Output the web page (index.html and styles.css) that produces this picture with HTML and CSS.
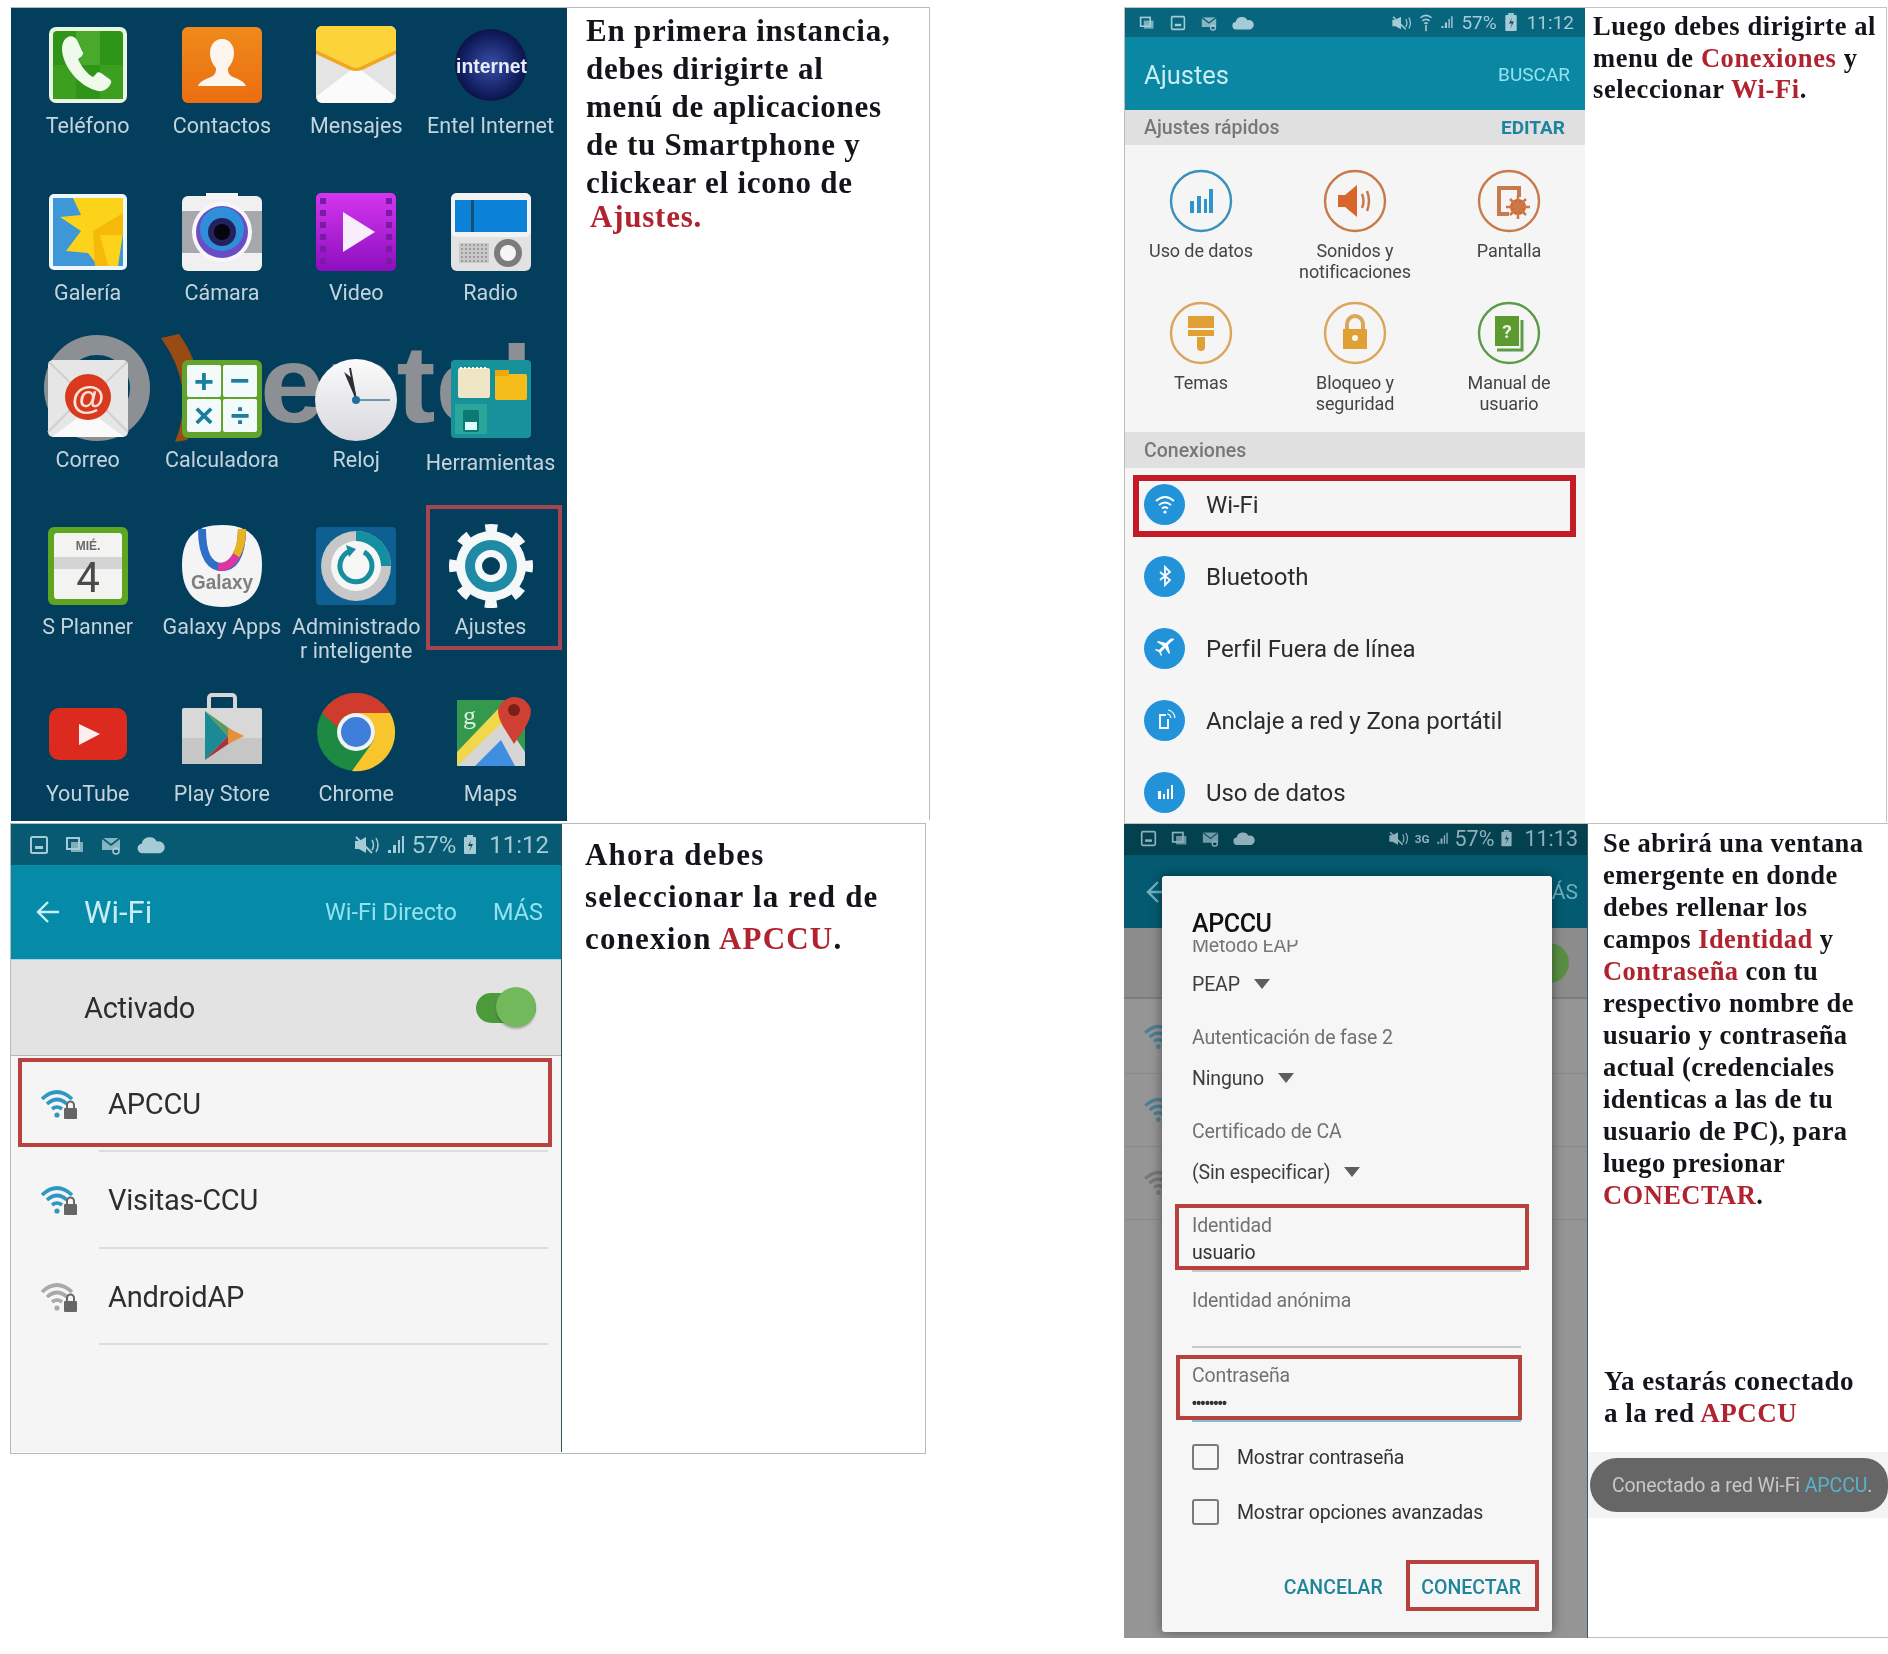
FILE: index.html
```html
<!DOCTYPE html>
<html lang="es">
<head>
<meta charset="utf-8">
<title>Conexión a la red APCCU</title>
<link rel="stylesheet" href="styles.css">
</head>
<body>
<svg class="sprite" aria-hidden="true">
  <symbol id="st-pic" viewBox="0 0 20 20"><rect x="2" y="2" width="16" height="16" rx="1.5" fill="none" stroke="currentColor" stroke-width="2"/><rect x="6" y="11" width="8" height="3" fill="currentColor"/></symbol>
  <symbol id="st-msg" viewBox="0 0 20 20"><rect x="2" y="3" width="12" height="11" fill="none" stroke="currentColor" stroke-width="2"/><path d="M6 7h12v10H6z" fill="currentColor" opacity=".75"/></symbol>
  <symbol id="st-mail" viewBox="0 0 20 20"><rect x="1" y="3" width="18" height="12" fill="currentColor" opacity=".8"/><path d="M1 3l9 7 9-7" fill="none" stroke="#0a5a70" stroke-width="1.6"/><circle cx="15" cy="16" r="3" fill="none" stroke="currentColor" stroke-width="1.5"/></symbol>
  <symbol id="st-cloud" viewBox="0 0 24 16"><path d="M5 15a4 4 0 0 1-1-8 7 7 0 0 1 13-2 5 5 0 0 1 3 10z" fill="currentColor"/></symbol>
  <symbol id="st-mute" viewBox="0 0 28 20"><path d="M7 6l7-4v16l-7-4H3V6z" fill="currentColor"/><path d="M4 2l16 16" stroke="currentColor" stroke-width="2"/><path d="M20 5q3 5 0 10M24 3q4 7 0 14" fill="none" stroke="currentColor" stroke-width="1.5"/></symbol>
  <symbol id="st-sig" viewBox="0 0 20 20"><path d="M2 18h3v-3H2zM7 18h3V10H7zM12 18h2V5h-2zM16 18h2V1h-2z" fill="currentColor"/></symbol>
  <symbol id="st-wifi" viewBox="0 0 16 24"><path d="M1 6q7-6 14 0M3.500 10q4.500-4 9 0M6 13.500q2-2 4 0" fill="none" stroke="currentColor" stroke-width="2"/><path d="M7 15h2v8H7z" fill="currentColor"/></symbol>
  <symbol id="st-bat" viewBox="0 0 14 20"><rect x="1" y="2" width="12" height="17" rx="1" fill="currentColor"/><rect x="4" y="0" width="6" height="2" fill="currentColor"/><path d="M8 5l-3 6h3l-2 6 4-8H7z" fill="#0a4a5c"/></symbol>
  <symbol id="wifi-lock" viewBox="0 0 38 32"><path d="M1 11Q16 -3 31 11M6 16q10-9 20 0M11 21q5-4 10 0" fill="none" stroke="currentColor" stroke-width="3.600"/><circle cx="16" cy="27" r="2.600" fill="currentColor"/><rect x="23" y="20" width="13" height="11" rx="1" fill="#666"/><path d="M26 20v-3a3.500 3.500 0 0 1 7 0v3" fill="none" stroke="#666" stroke-width="2"/></symbol>
</svg>

<main class="sheet">

  <section class="panel panel-apps">
    <div class="phone apps">
      <svg class="watermark" viewBox="0 0 556 813" aria-hidden="true">
        <circle cx="86" cy="380" r="43" fill="none" stroke="#8c9094" stroke-width="20"/>
        <path d="M150 330Q186 380 164 434L176 432Q204 376 168 326z" fill="#9a4b14"/>
        <text x="249" y="414" font-family="Liberation Sans" font-weight="700" font-size="110" textLength="273" lengthAdjust="spacingAndGlyphs" fill="#8c9094">entel</text>
      </svg>
      <div class="app-grid">
        <div class="app">
          <svg class="ico" viewBox="0 0 80 78"><rect x="1" y="1" width="78" height="76" rx="7" fill="#eaf5e2"/><rect x="5" y="5" width="70" height="68" rx="4" fill="#2f9518"/><path d="M28 5h24v34H28z" fill="#49a92a"/><path d="M5 39h23v34H5z" fill="#3c9f20"/><path d="M52 39h23v34H52z" fill="#3c9f20"/><path d="M20 11C14 14 13 22 15 30 19 45 33 61 50 65 56 66 61 62 63 57 64 55 62 53 60 52L53 47C51 46 49 46 48 48L45 51C39 48 33 40 30 33L34 30C35 28 36 27 34 25L29 14C27 11 23 9 20 11Z" fill="#f0faec"/></svg>
          <span class="app-name">Teléfono</span>
        </div>
        <div class="app">
          <svg class="ico" viewBox="0 0 80 78"><defs><linearGradient id="g-o" x1="0" y1="0" x2="0" y2="1"><stop offset="0" stop-color="#f08a1c"/><stop offset="1" stop-color="#ea6e10"/></linearGradient></defs><rect x="0" y="1" width="80" height="76" rx="6" fill="url(#g-o)"/><path d="M40 13c-8 0-12 7-12 14 0 6 3 12 6 15 0 5-1 7-5 9-5 2-11 4-13 9h48c-2-5-8-7-13-9-4-2-5-4-5-9 3-3 6-9 6-15 0-7-4-14-12-14z" fill="#fdf6ef"/></svg>
          <span class="app-name">Contactos</span>
        </div>
        <div class="app">
          <svg class="ico" viewBox="0 0 80 78"><rect x="0" y="0" width="80" height="77" rx="6" fill="#e4e4e4"/><path d="M1 70L40 40 79 70v1a6 6 0 0 1-6 6H7a6 6 0 0 1-6-6z" fill="#fbfbfb"/><path d="M0 6a6 6 0 0 1 6-6h68a6 6 0 0 1 6 6v18L46 40q-6 3-12 0L0 24z" fill="#fcd338"/><path d="M0 24L34 40q6 3 12 0L80 24v4L46 44q-6 2-12 0L0 28z" fill="#f1a81e"/></svg>
          <span class="app-name">Mensajes</span>
        </div>
        <div class="app">
          <svg class="ico" viewBox="0 0 80 78"><defs><radialGradient id="g-net" cx=".5" cy=".5" r=".6"><stop offset="0" stop-color="#3b4fa8"/><stop offset=".7" stop-color="#101c5c"/><stop offset="1" stop-color="#060c30"/></radialGradient></defs><circle cx="40" cy="39" r="36" fill="url(#g-net)"/><text x="5" y="47" class="ico-net" textLength="71" lengthAdjust="spacingAndGlyphs">internet</text></svg>
          <span class="app-name">Entel Internet</span>
        </div>

        <div class="app">
          <svg class="ico" viewBox="0 0 80 78"><rect x="1" y="1" width="78" height="76" rx="5" fill="#eef8fb"/><rect x="5" y="5" width="70" height="68" rx="3" fill="#2a78c4"/><path d="M5 5h70v68H5z" fill="#3e97d6"/><path d="M25 5H75V40L70 73H50L40 60 18 58 33 38 12 24 33 22z" fill="#fdd21a"/><path d="M45 38L75 20v22L52 42 60 73H47z" fill="#f6b809"/></svg>
          <span class="app-name">Galería</span>
        </div>
        <div class="app">
          <svg class="ico" viewBox="0 0 80 78"><rect x="0" y="3" width="80" height="75" rx="6" fill="#f0f0f0"/><rect x="24" y="0" width="32" height="6" fill="#f5f5f5"/><rect x="0" y="18" width="80" height="42" fill="#a7a8ad"/><circle cx="40" cy="39" r="30" fill="#f6f6fb"/><circle cx="40" cy="39" r="26" fill="#6a4cc4"/><circle cx="40" cy="36" r="22" fill="#2f8fd8"/><circle cx="40" cy="39" r="14" fill="#24225c"/><circle cx="40" cy="39" r="8" fill="#050510"/></svg>
          <span class="app-name">Cámara</span>
        </div>
        <div class="app">
          <svg class="ico" viewBox="0 0 80 78"><defs><linearGradient id="g-v" x1="0" y1="0" x2="0" y2="1"><stop offset="0" stop-color="#d436ee"/><stop offset="1" stop-color="#8c0fc0"/></linearGradient></defs><rect x="0" y="0" width="80" height="78" rx="5" fill="url(#g-v)"/><path d="M4 5h6v6H4zM4 17h6v6H4zM4 29h6v6H4zM4 41h6v6H4zM4 53h6v6H4zM4 65h6v6H4zM70 5h6v6h-6zM70 17h6v6h-6zM70 29h6v6h-6zM70 41h6v6h-6zM70 53h6v6h-6zM70 65h6v6h-6z" fill="#7a1aa5"/><path d="M27 19L59 39 27 59z" fill="#f8eefb"/></svg>
          <span class="app-name">Video</span>
        </div>
        <div class="app">
          <svg class="ico" viewBox="0 0 80 78"><rect x="0" y="0" width="80" height="78" rx="6" fill="#e2e2e2"/><rect x="0" y="0" width="80" height="44" rx="6" fill="#f3f3f3"/><rect x="4" y="7" width="72" height="32" fill="#0b82d8"/><rect x="20" y="7" width="3" height="32" fill="#14506f"/><path d="M8 50h30v20H8z" fill="#c8c8c8"/><path d="M10 52h26M10 56h26M10 60h26M10 64h26M10 68h26" stroke="#8e8e8e" stroke-width="1.600" stroke-dasharray="2 2"/><circle cx="57" cy="60" r="14" fill="#7b7b7b"/><circle cx="57" cy="60" r="8" fill="#f5f5f5"/></svg>
          <span class="app-name">Radio</span>
        </div>

        <div class="app">
          <svg class="ico" viewBox="0 0 80 78"><rect x="0" y="0" width="80" height="77" rx="5" fill="#e6e6e6"/><path d="M1 2L34 34q6 4 12 0L79 2" fill="none" stroke="#cfcfcf" stroke-width="2"/><path d="M0 72L22 50M80 72L58 50" stroke="#cfcfcf" stroke-width="2"/><path d="M4 77L40 50 76 77z" fill="#fafafa"/><circle cx="40" cy="37" r="23" fill="#d8391f"/><text x="40" y="49" text-anchor="middle" class="ico-at">@</text></svg>
          <span class="app-name">Correo</span>
        </div>
        <div class="app">
          <svg class="ico" viewBox="0 0 80 78"><rect x="0" y="0" width="80" height="78" rx="6" fill="#61a32c"/><rect x="5" y="5" width="34" height="32" rx="2" fill="#f2fafa"/><rect x="41" y="5" width="34" height="32" rx="2" fill="#f2fafa"/><rect x="5" y="39" width="34" height="33" rx="2" fill="#f2fafa"/><rect x="41" y="39" width="34" height="33" rx="2" fill="#f2fafa"/><text x="22" y="33" class="ico-op">+</text><text x="58" y="32" class="ico-op">−</text><text x="22" y="67" class="ico-op">×</text><text x="58" y="67" class="ico-op">÷</text></svg>
          <span class="app-name">Calculadora</span>
        </div>
        <div class="app">
          <svg class="ico" viewBox="0 0 80 78"><defs><linearGradient id="g-c" x1="0" y1="0" x2="0" y2="1"><stop offset="0" stop-color="#fbfbfb"/><stop offset="1" stop-color="#d8d8de"/></linearGradient></defs><circle cx="40" cy="40" r="41" fill="url(#g-c)"/><path d="M40 40L28 12 36 18 41 40z" fill="#2b2f33"/><path d="M40 40L34 8" stroke="#2b2f33" stroke-width="2"/><path d="M40 40H74" stroke="#3a7d9b" stroke-width="1.500"/><circle cx="40" cy="40" r="4" fill="#1d6e9a"/></svg>
          <span class="app-name">Reloj</span>
        </div>
        <div class="app app-low">
          <svg class="ico" viewBox="0 0 80 78"><rect x="0" y="0" width="80" height="78" rx="4" fill="#17929a"/><rect x="7" y="8" width="32" height="30" rx="2" fill="#efe6c6"/><path d="M9 8h28" stroke="#fff" stroke-width="2" stroke-dasharray="2 2"/><rect x="44" y="14" width="32" height="26" rx="2" fill="#f5bd1c"/><rect x="44" y="10" width="14" height="6" fill="#eea80e"/><rect x="4" y="44" width="32" height="30" fill="#2aa79a"/><rect x="12" y="50" width="16" height="22" rx="2" fill="#0c7a73"/><rect x="14" y="62" width="12" height="8" fill="#dff"/></svg>
          <span class="app-name">Herramientas</span>
        </div>

        <div class="app">
          <svg class="ico" viewBox="0 0 80 78"><rect x="0" y="0" width="80" height="78" rx="6" fill="#5ea521"/><rect x="6" y="6" width="68" height="66" rx="3" fill="#f3f3f1"/><rect x="6" y="30" width="68" height="12" fill="#d4d4d4"/><text x="40" y="23" text-anchor="middle" class="ico-cal-d">MIÉ.</text><text x="40" y="65" text-anchor="middle" class="ico-cal-n">4</text></svg>
          <span class="app-name">S Planner</span>
        </div>
        <div class="app">
          <svg class="ico" viewBox="0 0 80 78"><path d="M40-2C66-2 80 10 80 38S66 80 40 80 0 66 0 38 14-2 40-2z" fill="#f4f4f4"/><path d="M20 2c0 30 10 38 20 38S60 32 60 2" fill="none" stroke="#2f6fc8" stroke-width="8"/><path d="M36 40c10 1 24-8 24-38" fill="none" stroke="#d9369f" stroke-width="8"/><path d="M54 28c4-6 6-14 6-26" fill="none" stroke="#e5b420" stroke-width="8"/><text x="40" y="62" text-anchor="middle" class="ico-gal" textLength="62" lengthAdjust="spacingAndGlyphs">Galaxy</text></svg>
          <span class="app-name">Galaxy Apps</span>
        </div>
        <div class="app">
          <svg class="ico" viewBox="0 0 80 78"><rect x="0" y="0" width="80" height="78" rx="4" fill="#0e5f92"/><circle cx="40" cy="39" r="35" fill="#c7c7c7"/><path d="M40 4A35 35 0 0 1 75 39L60 39A20 20 0 0 0 40 19z" fill="#12909e"/><circle cx="40" cy="39" r="25" fill="#f6f6f6"/><path d="M34 24a16 16 0 1 0 14 1" fill="none" stroke="#168ea0" stroke-width="5"/><path d="M30 18l10 4-7 8z" fill="#168ea0"/></svg>
          <span class="app-name">Administrado<br>r inteligente</span>
        </div>
        <div class="app app-marked">
          <svg class="ico" viewBox="0 0 80 78"><circle cx="40" cy="39" r="38" fill="none" stroke="#f4f8f9" stroke-width="8" stroke-dasharray="12 17.850" stroke-dashoffset="6"/><circle cx="40" cy="39" r="35" fill="#f4f8f9"/><circle cx="40" cy="39" r="26" fill="#1e8aa5"/><circle cx="40" cy="39" r="16" fill="#f4f8f9"/><circle cx="40" cy="39" r="9" fill="#033e5c"/></svg>
          <span class="app-name">Ajustes</span>
          <span class="mark mark-app"></span>
        </div>

        <div class="app">
          <svg class="ico" viewBox="0 0 80 78"><rect x="1" y="14" width="78" height="52" rx="10" fill="#dc2a1e"/><path d="M31 30L52 40 31 51z" fill="#fbeeee"/></svg>
          <span class="app-name">YouTube</span>
        </div>
        <div class="app">
          <svg class="ico" viewBox="0 0 80 78"><path d="M27 16V4a3 3 0 0 1 3-3h20a3 3 0 0 1 3 3v12" fill="none" stroke="#d6d6d6" stroke-width="4"/><rect x="0" y="14" width="80" height="56" rx="2" fill="#d8d8d8"/><rect x="0" y="44" width="80" height="26" fill="#c6c6c6"/><path d="M23 17L46 42 23 66z" fill="#1b8a95"/><path d="M23 17L58 42 46 42z" fill="#5e9a5d"/><path d="M23 66L46 42 58 42z" fill="#a8343f"/><path d="M46 34L62 42 46 50z" fill="#e88f39"/></svg>
          <span class="app-name">Play Store</span>
        </div>
        <div class="app">
          <svg class="ico" viewBox="0 0 80 78"><circle cx="40" cy="38" r="39" fill="#1d8a44"/><path d="M6 19A39 39 0 0 1 74 19H40A20 20 0 0 0 21 33z" fill="#cf3b2c"/><path d="M74 19A39 39 0 0 1 36 77L54 52A20 20 0 0 0 40 19z" fill="#f8c52c"/><circle cx="40" cy="38" r="19" fill="#f2f2f2"/><circle cx="40" cy="38" r="15" fill="#3f7fd9"/></svg>
          <span class="app-name">Chrome</span>
        </div>
        <div class="app">
          <svg class="ico" viewBox="0 0 80 78"><rect x="6" y="6" width="68" height="66" fill="#35994d"/><path d="M6 72L50 22 74 58V72z" fill="#d6d6d6"/><path d="M6 72V58L48 14 56 24z" fill="#f0d84a"/><path d="M24 72L50 46 64 72z" fill="#3f8ee0"/><text x="12" y="30" class="ico-g">g</text><path d="M63 50C55 36 47 28 47 16a17 17 0 0 1 33 0C80 28 71 38 63 50z" fill="#cf3f33"/><circle cx="63" cy="16" r="6" fill="#7a2018"/></svg>
          <span class="app-name">Maps</span>
        </div>
      </div>
    </div>
    <p class="note note-apps">En primera instancia,<br>debes dirigirte al<br>menú de aplicaciones<br>de tu Smartphone y<br>clickear el icono de<br><span class="accent accent-tail">Ajustes.</span></p>
  </section>

  <section class="panel panel-settings">
    <div class="phone settings">
      <div class="status status-settings">
        <div class="st-left"><svg class="si"><use href="#st-msg"/></svg><svg class="si"><use href="#st-pic"/></svg><svg class="si"><use href="#st-mail"/></svg><svg class="si si-w"><use href="#st-cloud"/></svg></div>
        <div class="st-right"><svg class="si si-w"><use href="#st-mute"/></svg><svg class="si si-n"><use href="#st-wifi"/></svg><svg class="si si-n"><use href="#st-sig"/></svg><span>57%</span><svg class="si si-n"><use href="#st-bat"/></svg><span class="st-time">11:12</span></div>
      </div>
      <header class="appbar appbar-settings"><span class="ab-title">Ajustes</span><span class="ab-act">BUSCAR</span></header>
      <div class="band band-quick"><span>Ajustes rápidos</span><span class="band-act">EDITAR</span></div>
      <div class="quick">
        <div class="qk">
          <svg class="qk-ico qk-blue" viewBox="0 0 64 64"><circle cx="32" cy="32" r="30"/><path class="qk-fill" d="M21 32h4v12h-4zM28 27h4v17h-4zM35 30h3v14h-3zM40 20h4v24h-4z"/></svg>
          <span>Uso de datos</span>
        </div>
        <div class="qk">
          <svg class="qk-ico qk-oran" viewBox="0 0 64 64"><circle cx="32" cy="32" r="30"/><path class="qk-fill" d="M15 26h7l12-10v32L22 38h-7z"/><path d="M39 25q3 7 0 14M44 22q4 10 0 20" stroke-width="2.500"/></svg>
          <span>Sonidos y<br>notificaciones</span>
        </div>
        <div class="qk">
          <svg class="qk-ico qk-oran" viewBox="0 0 64 64"><circle cx="32" cy="32" r="30"/><path d="M32 45H22V19h20v9" stroke-width="4"/><circle class="qk-fill" cx="41" cy="38" r="8"/><path d="M41 26v24M29 38h24M33 30l16 16M49 30L33 46" stroke-width="2.500"/></svg>
          <span>Pantalla</span>
        </div>
        <div class="qk">
          <svg class="qk-ico qk-tan" viewBox="0 0 64 64"><circle cx="32" cy="32" r="30"/><path class="qk-fill" d="M19 15h26v12H19zM19 29h26v6H19zM28 36h8v10a4 4 0 0 1-8 0z"/></svg>
          <span>Temas</span>
        </div>
        <div class="qk">
          <svg class="qk-ico qk-tan" viewBox="0 0 64 64"><circle cx="32" cy="32" r="30"/><path d="M24 29v-6a8 8 0 0 1 16 0v6" stroke-width="4"/><path class="qk-fill" d="M20 28h24v20H20z"/><circle cx="32" cy="37" r="3" fill="#f6f6f6" stroke="none"/></svg>
          <span>Bloqueo y<br>seguridad</span>
        </div>
        <div class="qk">
          <svg class="qk-ico qk-green" viewBox="0 0 64 64"><circle cx="32" cy="32" r="30"/><path class="qk-fill" d="M18 15h24v30H18z"/><path d="M45 19v30H20" stroke-width="3"/><text x="30" y="37" text-anchor="middle" class="qk-q">?</text></svg>
          <span>Manual de<br>usuario</span>
        </div>
      </div>
      <div class="band band-conn">Conexiones</div>
      <ul class="conn-list">
        <li class="conn">
          <span class="conn-ico"><svg viewBox="0 0 24 24"><path d="M3 9q9-8 18 0M6 13q6-5 12 0M9 16.500q3-2.500 6 0" fill="none" stroke="#fff" stroke-width="1.800"/><circle cx="12" cy="20" r="1.600" fill="#fff"/></svg></span>Wi-Fi
          <span class="mark mark-wifi"></span>
        </li>
        <li class="conn"><span class="conn-ico"><svg viewBox="0 0 24 24"><path d="M7 8l10 8-5 5V3l5 5-10 8" fill="none" stroke="#fff" stroke-width="1.800"/></svg></span>Bluetooth</li>
        <li class="conn"><span class="conn-ico"><svg viewBox="0 0 24 24"><path d="M21 3c-2-1-4 0-5 1l-3 3-8-2-1 1 6 4-4 4-3-1-1 1 4 2 2 4 1-1-1-3 4-4 4 6 1-1-2-8 3-3c1-1 3-2 3-3z" fill="#fff"/></svg></span>Perfil Fuera de línea</li>
        <li class="conn"><span class="conn-ico"><svg viewBox="0 0 24 24"><path d="M13 7H7v13h8V11" fill="none" stroke="#fff" stroke-width="1.800"/><path d="M14 6q3 0 4 4M15 2q6 1 7 8" fill="none" stroke="#fff" stroke-width="1.200"/></svg></span>Anclaje a red y Zona portátil</li>
        <li class="conn"><span class="conn-ico"><svg viewBox="0 0 24 24"><path d="M5 11h3v8H5zM10 14h2v5h-2zM14 9h2v10h-2zM18 5h2v14h-2z" fill="#fff"/></svg></span>Uso de datos</li>
      </ul>
    </div>
    <p class="note note-settings">Luego debes dirigirte al<br>menu de <span class="accent">Conexiones</span> y<br>seleccionar <span class="accent">Wi-Fi</span>.</p>
  </section>

  <section class="panel panel-wifi">
    <div class="phone wifi">
      <div class="status status-wifi">
        <div class="st-left"><svg class="si"><use href="#st-pic"/></svg><svg class="si"><use href="#st-msg"/></svg><svg class="si"><use href="#st-mail"/></svg><svg class="si si-w"><use href="#st-cloud"/></svg></div>
        <div class="st-right"><svg class="si si-w"><use href="#st-mute"/></svg><svg class="si"><use href="#st-sig"/></svg><span>57%</span><svg class="si si-n"><use href="#st-bat"/></svg><span class="st-time">11:12</span></div>
      </div>
      <header class="appbar appbar-wifi">
        <svg class="back" viewBox="0 0 26 26"><path d="M24 13H3M13 3L3 13l10 10" fill="none" stroke="currentColor" stroke-width="2.400"/></svg>
        <span class="ab-title">Wi-Fi</span>
        <span class="ab-act ab-direct">Wi-Fi Directo</span>
        <span class="ab-act">MÁS</span>
      </header>
      <div class="onrow"><span>Activado</span><span class="toggle"><span class="thumb"></span></span></div>
      <ul class="nets">
        <li class="net"><svg class="net-ico"><use href="#wifi-lock"/></svg><span class="net-name">APCCU</span><span class="mark mark-net"></span></li>
        <li class="net"><svg class="net-ico"><use href="#wifi-lock"/></svg><span class="net-name">Visitas-CCU</span></li>
        <li class="net net-weak"><svg class="net-ico"><use href="#wifi-lock"/></svg><span class="net-name">AndroidAP</span></li>
      </ul>
    </div>
    <p class="note note-wifi">Ahora debes<br>seleccionar la red de<br>conexion <span class="accent">APCCU</span>.</p>
  </section>

  <section class="panel panel-form">
    <div class="phone form">
      <div class="status status-form">
        <div class="st-left"><svg class="si"><use href="#st-pic"/></svg><svg class="si"><use href="#st-msg"/></svg><svg class="si"><use href="#st-mail"/></svg><svg class="si si-w"><use href="#st-cloud"/></svg></div>
        <div class="st-right"><svg class="si si-w"><use href="#st-mute"/></svg><span class="st-3g">3G</span><svg class="si si-n"><use href="#st-sig"/></svg><span>57%</span><svg class="si si-n"><use href="#st-bat"/></svg><span class="st-time">11:13</span></div>
      </div>
      <header class="appbar appbar-form"><svg class="back" viewBox="0 0 26 26"><path d="M24 13H3M13 3L3 13l10 10" fill="none" stroke="currentColor" stroke-width="2.400"/></svg><span class="ab-act">MÁS</span></header>
      <div class="dim-on"><span class="dim-thumb"></span></div>
      <ul class="dim-list">
        <li><svg class="dim-ico"><use href="#wifi-lock"/></svg></li>
        <li><svg class="dim-ico"><use href="#wifi-lock"/></svg></li>
        <li class="dim-weak"><svg class="dim-ico"><use href="#wifi-lock"/></svg></li>
      </ul>

      <div class="dialog">
        <h2 class="dlg-title">APCCU</h2>
        <div class="dlg-clip"><span>Método EAP</span></div>
        <div class="dlg-val dlg-first"><span>PEAP</span><i class="caret"></i></div>
        <div class="dlg-lab dlg-sec">Autenticación de fase 2</div>
        <div class="dlg-val"><span>Ninguno</span><i class="caret"></i></div>
        <div class="dlg-lab dlg-sec">Certificado de CA</div>
        <div class="dlg-val"><span>(Sin especificar)</span><i class="caret"></i></div>
        <div class="field field-id">
          <div class="dlg-lab">Identidad</div>
          <div class="dlg-input">usuario</div>
          <span class="mark mark-id"></span>
        </div>
        <div class="field field-anon">
          <div class="dlg-lab">Identidad anónima</div>
          <div class="dlg-input"></div>
        </div>
        <div class="field field-pass">
          <div class="dlg-lab">Contraseña</div>
          <div class="dlg-input dlg-dots">••••••••</div>
          <span class="mark mark-pass"></span>
        </div>
        <label class="check check-first"><i class="box"></i>Mostrar contraseña</label>
        <label class="check"><i class="box"></i>Mostrar opciones avanzadas</label>
        <div class="dlg-actions">
          <span>CANCELAR</span>
          <span class="dlg-connect">CONECTAR<span class="mark mark-conn"></span></span>
        </div>
      </div>
    </div>
    <div class="form-side">
      <p class="note note-form">Se abrirá una ventana<br>emergente en donde<br>debes rellenar los<br>campos <span class="accent">Identidad</span> y<br><span class="accent">Contraseña</span> con tu<br>respectivo nombre de<br>usuario y contraseña<br>actual (credenciales<br>identicas a las de tu<br>usuario de PC), para<br>luego presionar<br><span class="accent">CONECTAR</span>.</p>
      <p class="note note-done">Ya estarás conectado<br>a la red <span class="accent">APCCU</span></p>
      <div class="toast-band"><div class="toast">Conectado a red Wi-Fi <span class="toast-net">APCCU</span>.</div></div>
    </div>
  </section>

</main>
</body>
</html>
```

FILE: styles.css
```css
* { box-sizing: border-box; }
html, body { margin: 0; padding: 0; background: #fff; }
body { width: 1888px; height: 1654px; overflow: hidden; font-family: Roboto, "Liberation Sans", sans-serif; }
.sprite { display: none; }
ul { list-style: none; margin: 0; padding: 0; }
p, h2 { margin: 0; }

.sheet {
  display: grid;
  grid-template-columns: 1114px 764px;
  grid-template-rows: 816px 815px;
  padding: 7px 0 0 10px;
  align-items: start;
}

.panel { display: flex; align-items: flex-start; }
.phone { position: relative; overflow: hidden; flex: none; filter: blur(.45px); }

/* explanatory text */
.note {
  font-family: "Liberation Serif", serif;
  font-weight: 700;
  color: #14141a;
  filter: blur(.3px);
}
.accent { color: #b1232f; }
.accent-tail { display: block; margin: -4px 0 0 4px; line-height: 38px; }

.note-apps { font-size: 31px; line-height: 38px; letter-spacing: .76px; padding: 4px 0 0 19px; }
.note-settings { font-size: 26.5px; line-height: 31.5px; letter-spacing: .6px; padding: 3px 0 0 8px; }
.note-wifi { font-size: 31px; line-height: 42px; letter-spacing: 1.2px; padding: 10px 0 0 23px; }
.note-form { font-size: 26.5px; line-height: 32px; letter-spacing: .45px; padding: 3px 0 0 15px; }
.note-done { font-size: 27px; line-height: 32px; letter-spacing: .5px; padding: 0 0 0 16px; margin-top: 154px; }

.panel-apps { width: 920px; height: 813px; border-left: 1px solid transparent; border-top: 1px solid #b9b9b9; border-right: 1px solid #b9b9b9; }
.panel-settings { width: 763px; height: 815px; border-top: 1px solid #c4c4c4; border-right: 1px solid #c4c4c4; }
.panel-wifi { width: 916px; height: 631px; border: 1px solid #b9b9b9; }
.panel-form { width: 764px; height: 815px; border-top: 1px solid #c0c0c0; border-bottom: 1px solid #c0c0c0; }

/* highlight rectangles */
.mark { position: absolute; display: block; pointer-events: none; }

/* apps */
.apps { width: 556px; height: 813px; background: #033e5c; }
.watermark { position: absolute; left: 0; top: 0; width: 556px; height: 813px; }
.app-grid {
  position: relative;
  display: grid;
  grid-template-columns: repeat(4, 134.3px);
  grid-auto-rows: 167px;
  padding: 18px 0 0 9.5px;
}
.app { position: relative; display: flex; flex-direction: column; align-items: center; }
.ico { width: 80px; height: 78px; flex: none; overflow: visible; }
.app-name { margin-top: 10px; font-size: 21.5px; line-height: 24px; color: #c5d4dc; text-align: center; white-space: nowrap; }
.app-low .app-name { margin-top: 13px; }
.mark-app { left: 3px; top: -22px; width: 136px; height: 145px; border: 4px solid #a6444f; }
.ico-net { font: 700 21px "Liberation Sans", sans-serif; fill: #e8eef8; }
.ico-at { font: 700 34px "Liberation Sans", sans-serif; fill: #fbe2da; }
.ico-op { font: 700 34px "Liberation Sans", sans-serif; fill: #1a7ea0; text-anchor: middle; }
.ico-cal-d { font: 700 12px "Liberation Sans", sans-serif; fill: #6a6a6a; }
.ico-cal-n { font: 400 42px Roboto, sans-serif; fill: #4a4a4a; }
.ico-gal { font: 700 20px "Liberation Sans", sans-serif; fill: #7f7f7f; }
.ico-g { font: 400 26px "Liberation Serif", serif; fill: #d8f0dc; }

/* status bars */
.status { display: flex; justify-content: space-between; align-items: center; color: #a5cbd6; }
.st-left, .st-right { display: flex; align-items: center; }
.si { display: block; width: 1em; height: 1em; }
.si-w { width: 1.25em; }
.si-n { width: .75em; }
.st-3g { font-size: .55em; font-weight: 700; }

.status-settings { height: 29px; background: #07667d; font-size: 19px; padding: 0 11px 0 14px; }
.status-settings .si { width: 16px; height: 16px; }
.status-settings .si-w { width: 22px; }
.status-settings .si-n { width: 14px; height: 19px; }
.status-settings .st-left { gap: 15px; }
.status-settings .st-right { gap: 7px; }
.status-settings .st-time { margin-left: 2px; }

.status-wifi { height: 41px; background: #075a72; font-size: 24px; padding: 0 12px 0 18px; }
.status-wifi .si { width: 20px; height: 20px; }
.status-wifi .si-w { width: 28px; }
.status-wifi .si-n { width: 16px; }
.status-wifi .st-left { gap: 16px; }
.status-wifi .st-right { gap: 6px; }
.status-wifi .st-time { margin-left: 5px; }

.status-form { height: 31px; padding: 0 9px 2px 16px; background: #03414f; font-size: 21.5px; color: #8fb0ba; }
.status-form .si { width: 17px; height: 17px; }
.status-form .si-w { width: 22px; }
.status-form .si-n { width: 13px; }
.status-form .st-left { gap: 14px; }
.status-form .st-right { gap: 6px; }
.status-form .st-time { margin-left: 5px; }

/* app bars */
.appbar { display: flex; align-items: center; }
.ab-title { color: #c9edf2; }
.ab-act { color: #93e2ee; }

.appbar-settings { height: 73px; background: #0a87a3; justify-content: space-between; padding: 2px 15px 0 19px; }
.appbar-settings .ab-title { font-size: 25.5px; }
.appbar-settings .ab-act { font-size: 19px; }

.appbar-wifi { height: 95px; background: #058aa7; padding: 0 18px 0 24px; color: #c9f0f4; border-bottom: 1px solid #9fd6e0; }
.appbar-wifi .back { width: 26px; height: 26px; flex: none; }
.appbar-wifi .ab-title { font-size: 31px; margin-left: 23px; flex: 1; }
.appbar-wifi .ab-act { font-size: 23.5px; }
.ab-direct { margin-right: 36px; }

.appbar-form { height: 73px; background: #045a70; justify-content: space-between; padding: 0 9px 0 21px; color: #6fb0bf; }
.appbar-form .back { width: 26px; height: 26px; }
.appbar-form .ab-act { font-size: 21px; color: #6fb0bf; }

/* settings */
.settings { width: 461px; height: 815px; background: #f5f5f5; border-left: 1px solid #bdbdbd; }
.band { background: #e0e0e0; display: flex; align-items: center; justify-content: space-between; color: #777; font-size: 19.5px; font-weight: 500; padding: 0 20px 0 19px; }
.band-quick { height: 35px; }
.band-conn { height: 36px; }
.band-act { color: #1f84a0; font-weight: 700; font-size: 19px; }
.quick { display: grid; grid-template-columns: repeat(3, 154px); grid-auto-rows: 132px; height: 287px; padding: 24px 0 0 0; margin-left: -1px; }
.qk { display: flex; flex-direction: column; align-items: center; text-align: center; font-size: 18px; line-height: 20.5px; color: #444; letter-spacing: -.1px; }
.qk span { margin-top: 8px; }
.qk-ico { width: 64px; height: 64px; flex: none; fill: none; stroke-width: 2.400; }
.qk-blue { stroke: #3b8fb8; }
.qk-oran { stroke: #c77b4c; }
.qk-tan { stroke: #dba55b; }
.qk-green { stroke: #5c9c48; }
.qk-fill { stroke: none; }
.qk-blue .qk-fill { fill: #2f94c9; }
.qk-oran .qk-fill { fill: #d8662a; }
.qk-tan .qk-fill { fill: #e0a034; }
.qk-green .qk-fill { fill: #5c9a30; }
.qk-q { font: 700 19px Roboto, sans-serif; fill: #eaf3e2; stroke: none; }

.conn { position: relative; display: flex; align-items: center; height: 72px; padding: 2px 0 0 19px; font-size: 24px; color: #2c2c2c; letter-spacing: -.05px; }
.conn-ico { display: flex; align-items: center; justify-content: center; width: 41px; height: 41px; flex: none; border-radius: 50%; background: #2293d8; margin: -2px 21px 0 0; }
.conn-ico svg { width: 24px; height: 24px; }
.mark-wifi { left: 8px; top: 7px; width: 443px; height: 62px; border: 6px solid #c41b29; }

/* wifi */
.wifi { width: 551px; height: 628px; background: #f5f5f5; border-right: 1px solid #33515c; }
.onrow { display: flex; align-items: center; justify-content: space-between; height: 96px; background: #e3e3e3; border-bottom: 1px solid #b5b5b5; padding: 0 25px 0 73px; font-size: 29px; color: #2d2d2d; letter-spacing: -.25px; }
.toggle { position: relative; display: block; width: 60px; height: 30px; background: #4d9a3d; border-radius: 15px; }
.thumb { position: absolute; right: 0; top: -6px; width: 40px; height: 40px; border-radius: 50%; background: #71b95a; box-shadow: 0 2px 2px rgba(0,0,0,.25); }
.net { position: relative; display: flex; align-items: center; height: 96.3px; }
.net::after { content: ""; position: absolute; left: 88px; right: 13px; bottom: 0; height: 2px; background: #dddddd; }
.net-ico { width: 38px; height: 32px; margin-left: 30px; flex: none; color: #2f97c4; }
.net-weak .net-ico { color: #a9a9a9; }
.net-name { margin-left: 29px; font-size: 29px; color: #2e2e2e; letter-spacing: -.2px; }
.mark-net { z-index: 1; left: 7px; top: 2px; width: 534px; height: 89px; border: 4.500px solid #b9413f; }

/* wifi form */
.form { width: 464px; height: 814px; background: #959595; border-right: 1px solid #3a5a66; }
.dim-on { position: relative; height: 71px; background: #8c8c8c; border-bottom: 2px solid #7d7d7d; }
.dim-thumb { position: absolute; right: 18px; top: 15px; width: 40px; height: 40px; border-radius: 50%; background: #5a8e44; }
.dim-list { padding: 2px 0 0 0; }
.dim-list li { height: 73px; display: flex; align-items: center; border-bottom: 1px solid #898989; }
.dim-ico { width: 34px; height: 28px; margin-left: 20px; color: #4c7f93; }
.dim-weak .dim-ico { color: #777; }

.dialog {
  position: absolute;
  left: 38px;
  top: 52px;
  width: 390px;
  height: 756px;
  padding: 32px 31px 0 30px;
  background: #f6f6f6;
  border-radius: 3px;
  box-shadow: 0 0 12px rgba(0,0,0,.45);
  font-size: 19.5px;
  color: #3e3e3e;
  letter-spacing: -.15px;
}
.dlg-title { font-size: 25px; line-height: 32px; font-weight: 500; color: #111; letter-spacing: -.4px; }
.dlg-clip { height: 14px; overflow: hidden; color: #777; }
.dlg-clip span { display: block; margin-top: -5px; line-height: 22px; }
.dlg-val { display: flex; align-items: center; height: 24px; margin-top: 16px; }
.dlg-first { margin-top: 18px; }
.caret { display: block; width: 0; height: 0; margin-left: 14px; border-left: 8.500px solid transparent; border-right: 8.500px solid transparent; border-top: 10px solid #5e5e5e; }
.dlg-lab { line-height: 24px; color: #717171; }
.dlg-sec { margin-top: 30px; }
.field { position: relative; }
.field-id { margin-top: 30px; }
.field-anon { margin-top: 17px; }
.field-pass { margin-top: 16px; }
.dlg-input { height: 34px; padding-top: 3px; line-height: 24px; color: #333; border-bottom: 2px solid #c9c9c9; }
.field-anon .dlg-input { height: 35px; }
.dlg-dots { font: 700 14px/24px "Liberation Sans", sans-serif; letter-spacing: -.6px; }
.field-pass .dlg-input { border-bottom-color: #7fc0d2; }
.mark-id { left: -17px; right: -8px; top: -10px; height: 66px; border: 4px solid #b7413f; }
.mark-pass { left: -16px; right: -1px; top: -9px; height: 65px; border: 4px solid #b7413f; }
.check { display: flex; align-items: center; height: 26px; margin-top: 29px; color: #333; }
.check-first { margin-top: 22px; }
.box { display: block; width: 27px; height: 26px; margin-right: 18px; border: 2px solid #7a7a7a; border-radius: 3px; }
.dlg-actions { display: flex; justify-content: flex-end; gap: 38.500px; margin-top: 51px; line-height: 24px; font-size: 19.5px; font-weight: 500; color: #1f8499; letter-spacing: 0; }
.dlg-connect { position: relative; }
.mark-conn { left: -15px; right: -18px; top: -16px; bottom: -11px; border: 4px solid #b7413f; }

/* right column of the form panel */
.form-side { flex: 1; min-width: 0; }
.toast-band { margin-top: 23px; padding: 6px 0 6px 2px; background: #f3f3f3; }
.toast { height: 54px; padding-left: 22px; display: flex; align-items: center; white-space: pre; background: #666; border-radius: 27px 24px 24px 27px; font-size: 19.5px; color: #c8c8c8; letter-spacing: -.1px; filter: blur(.4px); }
.toast-net { color: #58b2cc; }
```
